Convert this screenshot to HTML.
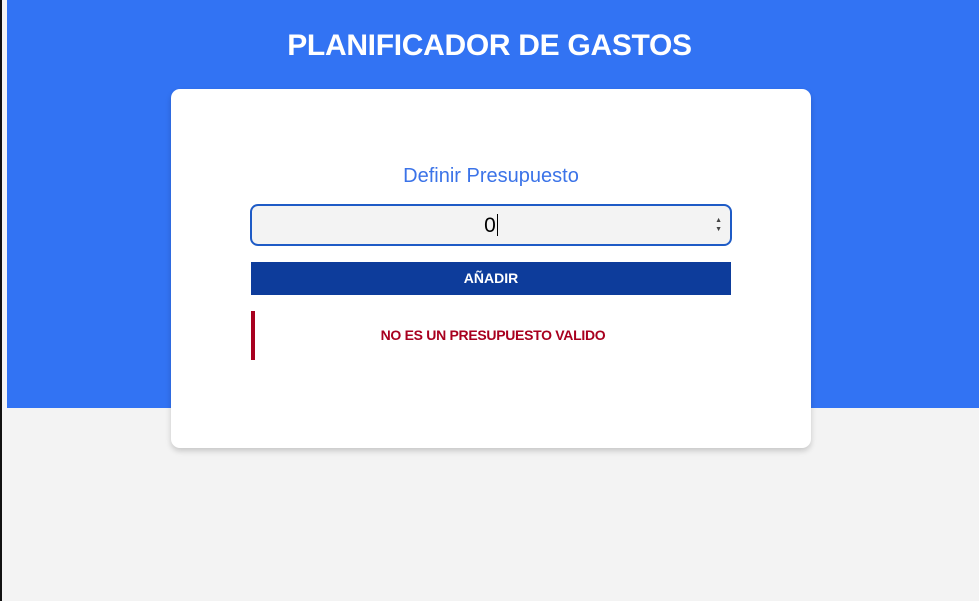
<!DOCTYPE html>
<html><head><meta charset="utf-8"><style>
*{box-sizing:border-box;margin:0;padding:0}
html,body{width:979px;height:601px;overflow:hidden;background:#f3f3f3;font-family:"Liberation Sans",sans-serif}
.edge{position:absolute;left:0;top:0;width:2px;height:601px;background:#111}
.hdr{position:absolute;left:7px;top:0;width:972px;height:408px;background:#3273f3}
h1{position:absolute;left:0;width:979px;top:29px;text-align:center;color:#fff;font-size:30px;font-weight:bold;letter-spacing:-0.3px}
.card{position:absolute;left:171px;top:89px;width:640px;height:359px;background:#fff;border-radius:9px;box-shadow:0 3px 6px rgba(0,0,0,.18)}
.lbl{position:absolute;left:0;width:640px;top:76px;text-align:center;color:#3b73e8;font-size:20px}
.inp{position:absolute;left:79px;top:115px;width:482px;height:42px;background:#f3f3f3;border:2px solid #1e5bc6;border-radius:8px}
.inp span{position:absolute;left:0;width:100%;top:8px;text-align:center;font-size:21px;color:#000}
.cur{display:inline-block;width:1px;height:22px;background:#000;vertical-align:-4px;margin-left:1px}
.spin{position:absolute;right:8px;top:10px;font-size:7px;line-height:9px;color:#444}
.btn{position:absolute;left:80px;top:173px;width:480px;height:33px;background:#0d3c9b;color:#fff;font-weight:bold;font-size:14px;text-align:center;line-height:33px}
.alert{position:absolute;left:80px;top:222px;width:480px;height:49px;border-left:4px solid #a8001f;color:#a8001f;font-weight:bold;font-size:14px;text-align:center;line-height:49px;letter-spacing:-0.3px}
</style></head><body>
<div class="edge"></div>
<div class="hdr"></div>
<h1>PLANIFICADOR DE GASTOS</h1>
<div class="card">
<div class="lbl">Definir Presupuesto</div>
<div class="inp"><span>0<i class="cur"></i></span><div class="spin">▲<br>▼</div></div>
<div class="btn">AÑADIR</div>
<div class="alert">NO ES UN PRESUPUESTO VALIDO</div>
</div>
</body></html>
